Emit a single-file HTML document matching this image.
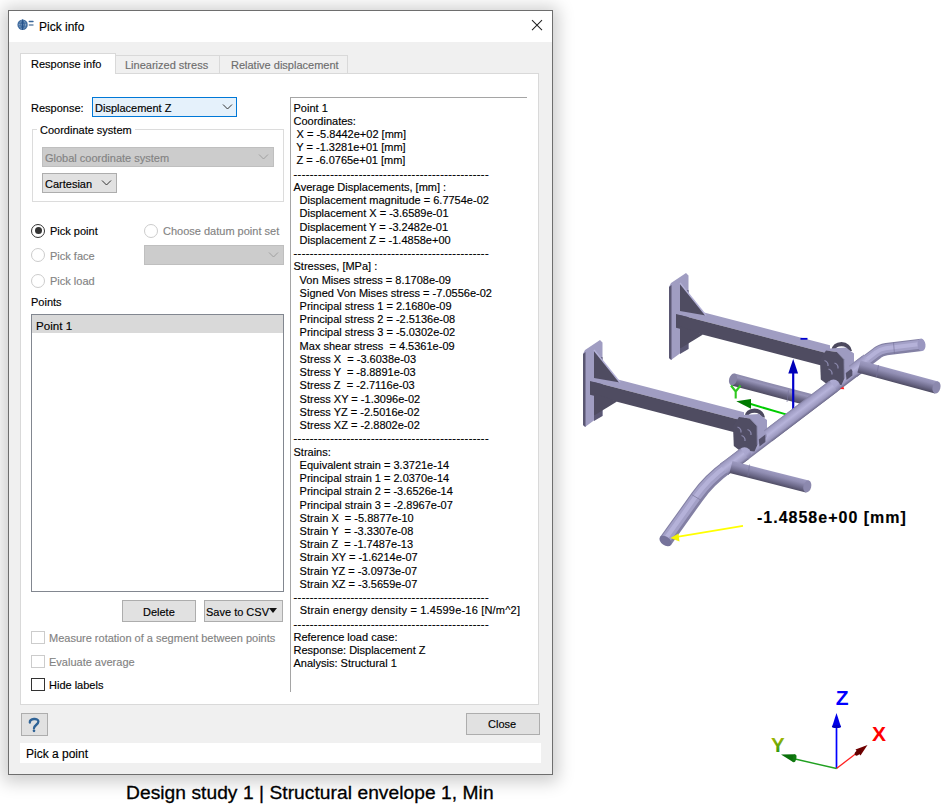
<!DOCTYPE html>
<html><head><meta charset="utf-8">
<style>
*{margin:0;padding:0;box-sizing:border-box}
html,body{width:951px;height:811px;overflow:hidden;background:#fff}
body{position:relative;font-family:"Liberation Sans",sans-serif;font-size:11px;color:#000;-webkit-text-stroke:0.15px currentColor}
.a{position:absolute}
.tx{position:absolute;white-space:pre;line-height:13px;margin-top:1px}
.g{color:#838383}
#win{left:8px;top:10px;width:545px;height:765px;border:1px solid #6e6e6e;background:#f0f0f0;box-shadow:0 2px 16px 5px rgba(0,0,0,0.2)}
.btn{position:absolute;background:#e1e1e1;border:1px solid #adadad}
.cb{position:absolute;width:13px;height:13px;border:1px solid #333;background:#fff}
.cb.d{border-color:#cccccc}
.rd{position:absolute;width:14px;height:14px;border:1.3px solid #333;border-radius:50%;background:#fff}
.rd.d{border-color:#cccccc}
</style></head><body>
<div id="win" class="a"></div>
<!-- title bar -->
<div class="a" style="left:9px;top:11px;width:543px;height:31px;background:#fff"></div>
<svg class="a" style="left:14px;top:17px" width="24" height="16" viewBox="0 0 24 16">
  <circle cx="8.6" cy="7.8" r="5.2" fill="#3e6b9f"/>
  <ellipse cx="8.6" cy="7.8" rx="2.9" ry="4.3" fill="none" stroke="#b8c8dc" stroke-width="0.7" stroke-dasharray="1 0.8"/>
  <path d="M3.6 7.8H13.6" stroke="#a9bcd4" stroke-width="0.6" stroke-dasharray="1 0.8"/>
  <path d="M8.6 2.6V13" stroke="#24508a" stroke-width="1.1"/>
  <rect x="14.6" y="3.8" width="5.1" height="1.5" rx="0.7" fill="#3a6698"/>
  <rect x="14.6" y="7.3" width="5.1" height="1.5" rx="0.7" fill="#6a88ab"/>
</svg>
<div class="tx" style="left:39px;top:19px;font-size:12px;line-height:14px">Pick info</div>
<svg class="a" style="left:530px;top:18px" width="14" height="14" viewBox="0 0 14 14">
  <path d="M2 2.2L12 12.2M12 2.2L2 12.2" stroke="#222" stroke-width="1.05"/>
</svg>

<!-- tab panel -->
<div class="a" style="left:20px;top:73px;width:519px;height:632px;background:#fff;border:1px solid #d9d9d9"></div>
<div class="a" style="left:115px;top:55px;width:105px;height:19px;background:#f0f0f0;border:1px solid #d9d9d9"></div>
<div class="a" style="left:219px;top:55px;width:129px;height:19px;background:#f0f0f0;border:1px solid #d9d9d9"></div>
<div class="a" style="left:20px;top:53px;width:96px;height:21px;background:#fff;border:1px solid #d9d9d9;border-bottom:none"></div>
<div class="tx" style="left:31px;top:57px">Response info</div>
<div class="tx g" style="left:125px;top:58px;color:#6d6d6d">Linearized stress</div>
<div class="tx g" style="left:231px;top:58px;color:#6d6d6d">Relative displacement</div>

<!-- response -->
<div class="tx" style="left:31px;top:101px">Response:</div>
<div class="a" style="left:92px;top:97px;width:145px;height:20px;background:#e5f1fb;border:1px solid #0078d7"></div>
<div class="tx" style="left:95px;top:101px">Displacement Z</div>
<svg class="a" style="left:222px;top:103px" width="12" height="8"><path d="M1 1.5L5.5 6L10 1.5" stroke="#333" fill="none" stroke-width="1"/></svg>

<!-- group box -->
<div class="a" style="left:32px;top:129px;width:252px;height:73px;border:1px solid #dcdcdc"></div>
<div class="tx" style="left:37px;top:123px;background:#fff;padding:0 3px">Coordinate system</div>
<div class="a" style="left:42px;top:147px;width:232px;height:20px;background:#cccccc;border:1px solid #bfbfbf"></div>
<div class="tx" style="left:45px;top:151px;color:#838383">Global coordinate system</div>
<svg class="a" style="left:258px;top:153px" width="12" height="8"><path d="M1 1.5L5.5 6L10 1.5" stroke="#a0a0a0" fill="none" stroke-width="1"/></svg>
<div class="a" style="left:42px;top:173px;width:75px;height:20px;background:#e1e1e1;border:1px solid #adadad"></div>
<div class="tx" style="left:45px;top:177px">Cartesian</div>
<svg class="a" style="left:101px;top:179px" width="12" height="8"><path d="M1 1.5L5.5 6L10 1.5" stroke="#333" fill="none" stroke-width="1"/></svg>

<!-- radios -->
<div class="rd" style="left:31px;top:223.5px"></div>
<div class="a" style="left:34.5px;top:227px;width:7px;height:7px;border-radius:50%;background:#333"></div>
<div class="tx" style="left:50px;top:224px">Pick point</div>
<div class="rd d" style="left:144px;top:223.5px"></div>
<div class="tx g" style="left:163px;top:224px">Choose datum point set</div>
<div class="rd d" style="left:31px;top:248px"></div>
<div class="tx g" style="left:50px;top:249px">Pick face</div>
<div class="a" style="left:144px;top:245px;width:140px;height:20px;background:#cccccc;border:1px solid #bfbfbf"></div>
<svg class="a" style="left:268px;top:251px" width="12" height="8"><path d="M1 1.5L5.5 6L10 1.5" stroke="#a0a0a0" fill="none" stroke-width="1"/></svg>
<div class="rd d" style="left:31px;top:273.5px"></div>
<div class="tx g" style="left:50px;top:274px">Pick load</div>

<div class="tx" style="left:31px;top:295px">Points</div>
<div class="a" style="left:31px;top:314px;width:253px;height:278px;background:#fff;border:1px solid #828790"></div>
<div class="a" style="left:32px;top:315px;width:251px;height:18px;background:#d9d9d9"></div>
<div class="tx" style="left:36px;top:317.5px;font-size:11.6px">Point 1</div>

<div class="btn" style="left:122px;top:600px;width:74px;height:22px"></div>
<div class="tx" style="left:143px;top:605px">Delete</div>
<div class="btn" style="left:204px;top:600px;width:79px;height:22px"></div>
<div class="tx" style="left:206px;top:605px">Save to CSV</div>
<svg class="a" style="left:269px;top:608px" width="9" height="6"><path d="M0 0H8L4 5Z" fill="#111"/></svg>

<div class="cb d" style="left:31px;top:631px;width:14px"></div>
<div class="tx g" style="left:49px;top:631px">Measure rotation of a segment between points</div>
<div class="cb d" style="left:31px;top:654.5px;width:14px"></div>
<div class="tx g" style="left:49px;top:654.5px">Evaluate average</div>
<div class="cb" style="left:31px;top:678px;width:14px"></div>
<div class="tx" style="left:49px;top:677.5px">Hide labels</div>

<!-- text panel -->
<div class="a" style="left:290px;top:97px;width:237px;height:595px;border-left:1px solid #a5a5a5;border-top:1px solid #a5a5a5"></div>
<div class="tx" style="left:293.5px;top:100.5px;line-height:13.24px">Point 1
Coordinates:
 X = -5.8442e+02 [mm]
 Y = -1.3281e+01 [mm]
 Z = -6.0765e+01 [mm]
<span style="letter-spacing:0.41px">------------------------------------------------</span>
Average Displacements, [mm] :
  Displacement magnitude = 6.7754e-02
  Displacement X = -3.6589e-01
  Displacement Y = -3.2482e-01
  Displacement Z = -1.4858e+00
<span style="letter-spacing:0.41px">------------------------------------------------</span>
Stresses, [MPa] :
  Von Mises stress = 8.1708e-09
  Signed Von Mises stress = -7.0556e-02
  Principal stress 1 = 2.1680e-09
  Principal stress 2 = -2.5136e-08
  Principal stress 3 = -5.0302e-02
  Max shear stress  = 4.5361e-09
  Stress X  = -3.6038e-03
  Stress Y  = -8.8891e-03
  Stress Z  = -2.7116e-03
  Stress XY = -1.3096e-02
  Stress YZ = -2.5016e-02
  Stress XZ = -2.8802e-02
<span style="letter-spacing:0.41px">------------------------------------------------</span>
Strains:
  Equivalent strain = 3.3721e-14
  Principal strain 1 = 2.0370e-14
  Principal strain 2 = -3.6526e-14
  Principal strain 3 = -2.8967e-07
  Strain X  = -5.8877e-10
  Strain Y  = -3.3307e-08
  Strain Z  = -1.7487e-13
  Strain XY = -1.6214e-07
  Strain YZ = -3.0973e-07
  Strain XZ = -3.5659e-07
<span style="letter-spacing:0.41px">------------------------------------------------</span>
  <span style="letter-spacing:0.2px">Strain energy density = 1.4599e-16 [N/m^2]</span>
<span style="letter-spacing:0.41px">------------------------------------------------</span>
Reference load case:
Response: Displacement Z
Analysis: Structural 1</div>

<!-- bottom -->
<div class="btn" style="left:21px;top:713px;width:27px;height:23px"></div>
<svg class="a" style="left:0;top:0;overflow:visible" width="1" height="1"><path d="M29.8 722.5C29.6 718.4 38.4 717.6 38.4 721.6C38.4 724.6 34.2 724.9 34 728.3" stroke="#2f6396" stroke-width="2.3" fill="none" stroke-linecap="round"/><circle cx="34" cy="730.8" r="1.35" fill="#2f6396"/></svg>
<div class="btn" style="left:466px;top:713px;width:74px;height:22px"></div>
<div class="tx" style="left:488px;top:717px">Close</div>
<div class="a" style="left:20px;top:743px;width:521px;height:20px;background:#fff"></div>
<div class="tx" style="left:26px;top:746px;font-size:12px;line-height:14px">Pick a point</div>

<div class="tx" style="left:126px;top:781px;font-size:19.2px;line-height:22px;letter-spacing:0.05px;-webkit-text-stroke:0.3px #000">Design study 1 | Structural envelope 1, Min</div>

<!-- 3D model -->
<svg class="a" style="left:0;top:0" width="951" height="811" viewBox="0 0 951 811">
<defs><linearGradient id="g1" gradientUnits="userSpaceOnUse" x1="774.1" y1="384.1" x2="770.9" y2="395.9"><stop offset="0" stop-color="#8c89ab"/><stop offset="0.25" stop-color="#9794b8"/><stop offset="0.6" stop-color="#6e6b8a"/><stop offset="1" stop-color="#4e4b61"/></linearGradient><linearGradient id="g2" gradientUnits="userSpaceOnUse" x1="791.9" y1="409.3" x2="800.1" y2="420.0"><stop offset="0" stop-color="#8683a6"/><stop offset="0.12" stop-color="#9e9bc2"/><stop offset="0.45" stop-color="#b6b3da"/><stop offset="0.8" stop-color="#9c99bf"/><stop offset="1" stop-color="#6e6b8c"/></linearGradient><linearGradient id="g3" gradientUnits="userSpaceOnUse" x1="741.5" y1="448.1" x2="750.5" y2="457.1"><stop offset="0" stop-color="#aeabd3"/><stop offset="0.6" stop-color="#a9a6ce"/><stop offset="1" stop-color="#7d7aa0"/></linearGradient><linearGradient id="g4" gradientUnits="userSpaceOnUse" x1="730.2" y1="456.2" x2="738.3" y2="466.9"><stop offset="0" stop-color="#8683a6"/><stop offset="0.12" stop-color="#9e9bc2"/><stop offset="0.45" stop-color="#b6b3da"/><stop offset="0.8" stop-color="#9c99bf"/><stop offset="1" stop-color="#6e6b8c"/></linearGradient><linearGradient id="g5" gradientUnits="userSpaceOnUse" x1="830.5" y1="380.5" x2="839.5" y2="389.5"><stop offset="0" stop-color="#aeabd3"/><stop offset="0.6" stop-color="#a9a6ce"/><stop offset="1" stop-color="#7d7aa0"/></linearGradient><linearGradient id="g6" gradientUnits="userSpaceOnUse" x1="796.7" y1="405.7" x2="804.8" y2="416.4"><stop offset="0" stop-color="#8683a6"/><stop offset="0.12" stop-color="#9e9bc2"/><stop offset="0.45" stop-color="#b6b3da"/><stop offset="0.8" stop-color="#9c99bf"/><stop offset="1" stop-color="#6e6b8c"/></linearGradient><linearGradient id="g7" gradientUnits="userSpaceOnUse" x1="855.7" y1="360.8" x2="863.8" y2="371.6"><stop offset="0" stop-color="#8683a6"/><stop offset="0.12" stop-color="#9e9bc2"/><stop offset="0.45" stop-color="#b6b3da"/><stop offset="0.8" stop-color="#9c99bf"/><stop offset="1" stop-color="#6e6b8c"/></linearGradient><linearGradient id="g8" gradientUnits="userSpaceOnUse" x1="899.3" y1="371.1" x2="896.2" y2="382.9"><stop offset="0" stop-color="#9d9ac0"/><stop offset="0.3" stop-color="#918eb3"/><stop offset="0.72" stop-color="#6b6888"/><stop offset="1" stop-color="#504d65"/></linearGradient><linearGradient id="g9" gradientUnits="userSpaceOnUse" x1="770.7" y1="470.8" x2="767.6" y2="482.7"><stop offset="0" stop-color="#9d9ac0"/><stop offset="0.3" stop-color="#918eb3"/><stop offset="0.72" stop-color="#6b6888"/><stop offset="1" stop-color="#504d65"/></linearGradient></defs>
<polygon points="734.6,373.6 813.6,394.6 810.4,406.4 731.4,385.4" fill="url(#g1)" />
<ellipse cx="733.0" cy="379.5" rx="3.9" ry="6.1" transform="rotate(14.8 733.0 379.5)" fill="#8784a6"/>
<polygon points="671.0,283.0 686.0,273.0 688.5,275.5 688.5,349.0 686.0,349.0 671.0,360.0 669.0,358.0 669.0,287.0" fill="#a09dc2" />
<polygon points="669.0,287.0 671.5,285.0 671.5,360.0 669.0,358.0" fill="#5a5772" />
<polygon points="680.0,292.0 688.5,290.0 688.5,349.0 680.0,354.0" fill="#5a5773" />
<polygon points="676.0,305.2 830.0,345.2 830.0,353.9 676.0,313.9" fill="#a09dc2" />
<polygon points="676.0,313.9 830.0,353.9 830.0,367.7 676.0,327.7" fill="#4f4c61" />
<polygon points="680.0,326.2 703.0,334.6 681.0,348.0 680.0,348.0" fill="#4f4c61" />
<polygon points="680.0,283.0 680.0,311.0 706.0,315.5" fill="#4f4c61" />
<path d="M680.0 283.0 L706.0 315.5" stroke="#b5b2d8" stroke-width="1.4"/>
<path d="M793.2 371V410" stroke="#0000cc" stroke-width="2.2"/>
<polygon points="793.2,359 788.3,373.5 798.1,373.5" fill="#0000b8"/>
<path d="M800.5 338.8H807.5" stroke="#0000d0" stroke-width="1.8"/>
<polygon points="585.0,350.0 600.0,340.0 602.5,342.5 602.5,416.0 600.0,416.0 585.0,427.0 583.0,425.0 583.0,354.0" fill="#a09dc2" />
<polygon points="583.0,354.0 585.5,352.0 585.5,427.0 583.0,425.0" fill="#5a5772" />
<polygon points="594.0,359.0 602.5,357.0 602.5,416.0 594.0,421.0" fill="#5a5773" />
<polygon points="590.0,372.2 744.0,412.2 744.0,420.9 590.0,380.9" fill="#a09dc2" />
<polygon points="590.0,380.9 744.0,420.9 744.0,434.7 590.0,394.7" fill="#4f4c61" />
<polygon points="594.0,393.2 617.0,401.6 595.0,415.0 594.0,415.0" fill="#4f4c61" />
<polygon points="594.0,350.0 594.0,378.0 620.0,382.5" fill="#4f4c61" />
<path d="M594.0 350.0 L620.0 382.5" stroke="#b5b2d8" stroke-width="1.4"/>
<path d="M750 403.8L786 414.4" stroke="#00cc00" stroke-width="2"/>
<polygon points="736.3,401.2 751,399 751,408.8" fill="#007a00"/>
<path d="M731 385.5L735.7 391.5L740.5 385.5M735.7 391.5V398.5" stroke="#30c820" stroke-width="2.1" fill="none"/>
<path d="M665.5 541 L697 497 Q709 480 728.0 466.3" stroke="#8380a4" stroke-width="13.5" fill="none" stroke-linecap="butt"/>
<path d="M665.5 541 L697 497 Q709 480 728.0 466.3" stroke="#a3a0c7" stroke-width="9.7" fill="none" stroke-linecap="butt" transform="translate(-0.6,-0.6)"/>
<path d="M665.5 541 L697 497 Q709 480 728.0 466.3" stroke="#b5b2d9" stroke-width="4.3" fill="none" stroke-linecap="butt" transform="translate(-0.9,-0.9)"/>
<path d="M691.5 494.5 L701.5 500.5" stroke="#7f7ca0" stroke-width="0.8"/>
<path d="M864.0 363.0 L877 353.1 Q880.5 350.2 886.5 349.2 L921.5 344.8" stroke="#8380a4" stroke-width="12.4" fill="none" stroke-linecap="butt"/>
<path d="M864.0 363.0 L877 353.1 Q880.5 350.2 886.5 349.2 L921.5 344.8" stroke="#a3a0c7" stroke-width="8.9" fill="none" stroke-linecap="butt" transform="translate(-0.6,-0.6)"/>
<path d="M864.0 363.0 L877 353.1 Q880.5 350.2 886.5 349.2 L921.5 344.8" stroke="#b5b2d9" stroke-width="4.0" fill="none" stroke-linecap="butt" transform="translate(-0.9,-0.9)"/>
<polygon points="719.9,464.0 863.9,354.5 872.1,365.3 728.1,474.7" fill="url(#g2)" />
<ellipse cx="921.5" cy="344.8" rx="4.0" ry="6.2" transform="rotate(-5.7 921.5 344.8)" fill="#9a97c0"/>
<ellipse cx="665.5" cy="541.0" rx="4.3" ry="6.8" transform="rotate(-54.4 665.5 541.0)" fill="#75729a"/>
<path d="M831.5 350.0 Q832.5 342.5 841.5 342.0 Q850.5 342.8 852.0 351.0 L848.5 351.0 Q847.0 346.3 841.5 346.2 Q835.8 346.4 835.0 350.0 Z" fill="#4c495e"/>
<polygon points="822.0,349.0 846.0,347.5 854.0,353.5 854.0,370.5 844.3,378.5 844.0,359.4 837.0,352.0 826.0,350.5" fill="#9e9bc1" />
<polygon points="845.8,373.0 852.4,368.0 852.4,375.5 846.5,380.0" fill="#55526b" />
<polygon points="826.0,350.5 837.0,352.0 844.0,359.4 844.3,378.5 841.5,385.0 826.0,383.5 820.8,379.5 820.0,359.4" fill="#504d63" />
<path d="M837.0 352.0 L844.0 359.4 L844.3 378.5" stroke="#8784a8" stroke-width="0.9" fill="none"/>
<path d="M824.5 360.5 Q828.5 362.0 828.0 366.0" stroke="#8a87ab" stroke-width="1.3" fill="none"/>
<path d="M834.5 363.0 Q838.5 364.5 838.0 368.5" stroke="#8a87ab" stroke-width="1.3" fill="none"/>
<path d="M828.5 369.0 Q832.5 370.5 832.0 374.5" stroke="#8a87ab" stroke-width="1.3" fill="none"/>
<path d="M744.5 416.5 Q745.5 409.0 754.5 408.5 Q763.5 409.3 765.0 417.5 L761.5 417.5 Q760.0 412.8 754.5 412.7 Q748.8 412.9 748.0 416.5 Z" fill="#4c495e"/>
<polygon points="735.0,415.5 759.0,414.0 767.0,420.0 767.0,437.0 757.3,445.0 757.0,425.9 750.0,418.5 739.0,417.0" fill="#9e9bc1" />
<polygon points="758.8,439.5 765.4,434.5 765.4,442.0 759.5,446.5" fill="#55526b" />
<polygon points="739.0,417.0 750.0,418.5 757.0,425.9 757.3,445.0 754.5,451.5 739.0,450.0 733.8,446.0 733.0,425.9" fill="#504d63" />
<path d="M750.0 418.5 L757.0 425.9 L757.3 445.0" stroke="#8784a8" stroke-width="0.9" fill="none"/>
<path d="M737.5 427.0 Q741.5 428.5 741.0 432.5" stroke="#8a87ab" stroke-width="1.3" fill="none"/>
<path d="M747.5 429.5 Q751.5 431.0 751.0 435.0" stroke="#8a87ab" stroke-width="1.3" fill="none"/>
<path d="M741.5 435.5 Q745.5 437.0 745.0 441.0" stroke="#8a87ab" stroke-width="1.3" fill="none"/>
<circle cx="744.5" cy="453.8" r="6.5" fill="url(#g3)"/>
<polygon points="719.9,464.0 740.4,448.4 748.6,459.2 728.1,474.7" fill="url(#g4)" />
<circle cx="833.5" cy="386.1" r="6.5" fill="url(#g5)"/>
<polygon points="763.9,430.5 829.4,380.8 837.6,391.5 772.1,441.3" fill="url(#g6)" />
<polygon points="848.9,365.9 862.4,355.7 870.6,366.4 857.1,376.7" fill="url(#g7)" />
<polygon points="860.6,360.6 938.1,381.6 934.9,393.4 857.4,372.4" fill="url(#g8)" />
<ellipse cx="936.5" cy="387.5" rx="3.9" ry="6.1" transform="rotate(15.1 936.5 387.5)" fill="#8c89ae"/>
<polygon points="732.5,461.1 808.8,480.6 805.8,492.4 729.5,472.9" fill="url(#g9)" />
<ellipse cx="807.3" cy="486.5" rx="3.9" ry="6.1" transform="rotate(14.3 807.3 486.5)" fill="#8c89ae"/>
<path d="M749.5 464.5 L748.0 476.0" stroke="#77749a" stroke-width="0.8" opacity="0.8"/>
<path d="M878.5 365.0 L876.5 377.0" stroke="#77749a" stroke-width="0.8" opacity="0.8"/>
<path d="M788.5 390.5 L787.0 402.0" stroke="#77749a" stroke-width="0.8" opacity="0.8"/>
<path d="M893.5 342.5 L894.5 354.0" stroke="#77749a" stroke-width="0.8" opacity="0.8"/>
<polygon points="840,389 843.3,386.5 844.3,389.2" fill="#ff2020"/>
<path d="M743 525.8L674 537.3" stroke="#ffff00" stroke-width="1.8"/>
<polygon points="670.5,538 678.5,533.5 679.5,541.5" fill="#f4f400"/>
</svg>

<div class="tx" style="left:757px;top:508px;font-size:16px;line-height:18px;font-weight:bold;letter-spacing:1px">-1.4858e+00 [mm]</div>
<!-- triad -->
<svg class="a" style="left:0;top:0" width="951" height="811" viewBox="0 0 951 811">
<path d="M836.5 768.5V727" stroke="#0000ff" stroke-width="1.7"/>
<polygon points="836.5,713 832,727 841,727" fill="#0000e8"/>
<ellipse cx="836.5" cy="726.5" rx="4.6" ry="1.6" fill="#0000c0"/>
<path d="M836.5 768.5L858 752" stroke="#ff2020" stroke-width="1.3"/>
<polygon points="867.5,745 855.5,749.5 860.5,755.5" fill="#700000"/>
<ellipse cx="858" cy="752.5" rx="2.2" ry="3.8" transform="rotate(50 858 752.5)" fill="#600000"/>
<path d="M836.5 768.5L794 758.8" stroke="#20a020" stroke-width="1.4"/>
<polygon points="781,754.5 795,754.2 793,762" fill="#0a700a"/>
<ellipse cx="794.5" cy="758.3" rx="1.8" ry="4" transform="rotate(13 794.5 758.3)" fill="#107a10"/>
<text x="835.8" y="704.5" font-family="Liberation Sans" font-weight="bold" font-size="21" fill="#0000ff">Z</text>
<text x="872" y="741" font-family="Liberation Sans" font-weight="bold" font-size="21" fill="#ff0000">X</text>
<defs><linearGradient id="yg" x1="0" y1="0" x2="0" y2="1"><stop offset="0" stop-color="#c8c000"/><stop offset="1" stop-color="#109010"/></linearGradient></defs>
<text x="771" y="752" font-family="Liberation Sans" font-weight="bold" font-size="20.5" fill="url(#yg)">Y</text>
</svg>
</body></html>
